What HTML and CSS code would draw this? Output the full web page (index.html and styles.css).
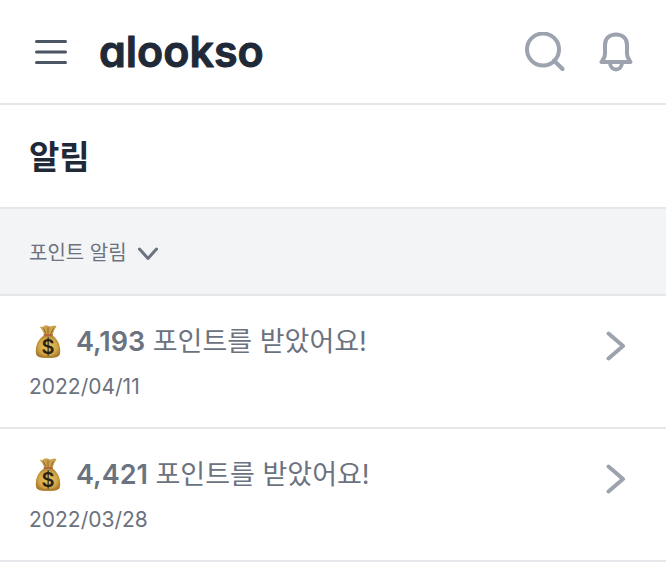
FILE: index.html
```html
<!DOCTYPE html>
<html lang="ko">
<head>
    <meta charset="UTF-8">
    <meta name="viewport" content="width=device-width, initial-scale=1.0">
    <title>알림 - alookso</title>
    <link rel="stylesheet" href="styles.css">
</head>
<body>
    <header class="header">
        <button class="icon-btn" aria-label="메뉴">
            <svg width="32" height="26" viewBox="0 0 32 26" class="menu-icon">
                <path d="M1.500 2.500H30.500M1.500 13H30.500M1.500 23.500H30.500"/>
            </svg>
        </button>
        <a href="#" class="logo">
            <svg width="168" height="54" viewBox="0 0 168 54">
                <text x="0" y="42" class="logo-text">alookso</text>
            </svg>
        </a>
        <div class="header-actions">
            <button class="icon-btn" aria-label="검색">
                <svg width="40" height="40" viewBox="0 0 40 40" class="action-icon">
                    <circle cx="18" cy="17.500" r="16"/>
                    <path d="M29 28.500L37.500 37"/>
                </svg>
            </button>
            <button class="icon-btn" aria-label="알림">
                <svg width="34" height="40" viewBox="0 0 34 40" class="action-icon">
                    <path d="M17 2.500C10 2.500 6 7 6 13V22C6 25.500 4 27.500 2.500 30H31.500C30 27.500 28 25.500 28 22V13C28 7 24 2.500 17 2.500Z"/>
                    <path d="M11 31C11.500 39.500 22.500 39.500 23 31"/>
                </svg>
            </button>
        </div>
    </header>

    <main>
        <h1 class="page-title">알림</h1>

        <div class="filter">
            <div class="filter-box">
                <select class="filter-select" aria-label="알림 종류">
                    <option>포인트 알림</option>
                </select>
                <svg width="20" height="14" viewBox="0 0 20 14" class="filter-arrow">
                    <path d="M1.500 2L10 11.500L18.500 2"/>
                </svg>
            </div>
        </div>

        <ul class="notices">
            <li>
                <a href="#" class="notice">
                    <div class="notice-body">
                        <p class="notice-text">
                            <svg width="26" height="34" viewBox="0 0 26 34">
                                <defs>
                                    <radialGradient id="gold" cx="50%" cy="50%" r="60%">
                                        <stop offset="0" stop-color="#e8c561"/>
                                        <stop offset="0.6" stop-color="#d3a849"/>
                                        <stop offset="1" stop-color="#9c6c22"/>
                                    </radialGradient>
                                    <g id="money-bag">
                                        <path d="M4.500 1.500Q7 2.500 9 1Q11 -.2 13 .8Q16 2 18 .8Q20 .2 21.500 1.500Q18.500 5 17.500 10H9.500Q8 5 4.500 1.500Z" fill="#c9a04c"/>
                                        <path d="M8.500 3.500l2.500 5M13 2.500v6M18.500 3.500l-2.500 5" stroke="#936522" stroke-width="1" fill="none"/>
                                        <path d="M9 10.500C4 13.500 .8 19 .8 26C.8 31.500 3 33 13 33S25.200 31.500 25.200 26C25.200 19 22 13.500 17.500 10.500Z" fill="url(#gold)"/>
                                        <path d="M3.500 29.500Q13 34 22.500 29.500" stroke="#b17f2d" stroke-width="1" fill="none"/>
                                        <rect x="8.500" y="9" width="9.500" height="2" rx="1" fill="#b0683f"/>
                                    </g>
                                </defs>
                                <use href="#money-bag"/>
                                <text x="13" y="29" text-anchor="middle" class="bag-sign">$</text>
                            </svg>
                            <span><strong>4,193</strong> 포인트를 받았어요!</span>
                        </p>
                        <time class="notice-date">2022/04/11</time>
                    </div>
                    <svg width="20" height="30" viewBox="0 0 20 30" class="notice-arrow">
                        <path d="M2.500 2.500L17 15L2.500 27.500"/>
                    </svg>
                </a>
            </li>
            <li>
                <a href="#" class="notice">
                    <div class="notice-body">
                        <p class="notice-text">
                            <svg width="26" height="34" viewBox="0 0 26 34">
                                <use href="#money-bag"/>
                                <text x="13" y="29" text-anchor="middle" class="bag-sign">$</text>
                            </svg>
                            <span><strong>4,421</strong> 포인트를 받았어요!</span>
                        </p>
                        <time class="notice-date">2022/03/28</time>
                    </div>
                    <svg width="20" height="30" viewBox="0 0 20 30" class="notice-arrow">
                        <path d="M2.500 2.500L17 15L2.500 27.500"/>
                    </svg>
                </a>
            </li>
        </ul>
    </main>
</body>
</html>
```
FILE: styles.css
```css
* {
    margin: 0;
    padding: 0;
    box-sizing: border-box;
}

body {
    font-family: 'Inter', 'Noto Sans CJK KR', sans-serif;
    background-color: #fff;
    color: #6b7280;
}

a {
    color: inherit;
    text-decoration: none;
}

svg {
    display: block;
    flex-shrink: 0;
}

/* Header */
.header {
    display: flex;
    align-items: center;
    padding: 25px 33px 24px 35px;
    border-bottom: 2px solid #e5e7eb;
}

.icon-btn {
    border: none;
    background: none;
    cursor: pointer;
}

.menu-icon {
    fill: none;
    stroke: #4b5563;
    stroke-width: 3;
    stroke-linecap: round;
}

.logo {
    margin-left: 32px;
}

.logo-text {
    font-size: 43px;
    font-weight: 600;
    font-feature-settings: 'cv11';
    fill: #1f2937;
    stroke: #1f2937;
    stroke-width: 1;
    stroke-linejoin: round;
}

.header-actions {
    display: flex;
    gap: 34px;
    margin-left: auto;
}

.action-icon {
    fill: none;
    stroke: #9ca3af;
    stroke-width: 4;
    stroke-linecap: round;
    stroke-linejoin: round;
}

/* Title */
.page-title {
    padding: 29px 29px 27px;
    border-bottom: 2px solid #e5e7eb;
    font-size: 33px;
    font-weight: 700;
    line-height: 46px;
    color: #1f2937;
}

/* Filter */
.filter {
    padding: 30px 29px 26px;
    background-color: #f3f4f6;
    border-bottom: 2px solid #e5e7eb;
}

.filter-box {
    position: relative;
    display: flex;
    width: fit-content;
}

.filter-select {
    appearance: none;
    padding-right: 31px;
    border: none;
    background: none;
    font-family: inherit;
    font-size: 20px;
    line-height: 29px;
    color: #6b7280;
    cursor: pointer;
}

.filter-arrow {
    position: absolute;
    right: 0;
    top: 8px;
    fill: none;
    stroke: #6b7280;
    stroke-width: 3;
    stroke-linecap: round;
    stroke-linejoin: round;
    pointer-events: none;
}

/* Notice list */
.notices {
    list-style: none;
}

.notice {
    display: flex;
    justify-content: space-between;
    padding: 24px 40px 24px 29px;
    border-bottom: 2px solid #e5e7eb;
}

.notice-text {
    display: flex;
    align-items: center;
    gap: 15px;
    padding-left: 6px;
    font-size: 27px;
    line-height: 43px;
}

.notice-text strong {
    font-weight: 600;
}

.notice-date {
    display: block;
    padding-top: 7px;
    font-size: 21px;
    line-height: 33px;
}

.notice-arrow {
    margin-top: 11px;
    fill: none;
    stroke: #9ca3af;
    stroke-width: 4;
    stroke-linecap: round;
    stroke-linejoin: round;
}

.bag-sign {
    font-family: 'Inter', sans-serif;
    font-size: 20px;
    font-weight: 600;
    fill: #2b2110;
}
```
